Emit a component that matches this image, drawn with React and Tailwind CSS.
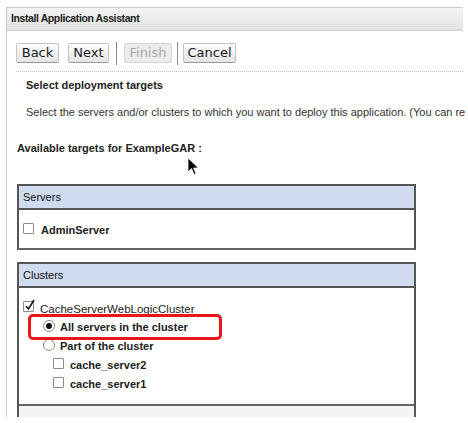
import React from "react";

const sans = { fontFamily: '"Liberation Sans", Arial, sans-serif' };

function Btn({ children, disabled, w }) {
  return (
    <div
      className={`h-[20px] ${w} flex items-center justify-center border rounded-[2px] text-[13px] ${
        disabled
          ? "border-[#d4d4d4] bg-[#ececec] text-[#a8a8a8]"
          : "border-[#c4c4c4] border-b-[#9a9a9a] bg-gradient-to-b from-[#fdfdfd] to-[#e4e4e4] text-[#1a1a1a]"
      }`}
      style={{ fontFamily: '"DejaVu Sans", sans-serif' }}
    >
      {children}
    </div>
  );
}

function Box({ checked }) {
  return (
    <div className="w-[11px] h-[11px] border border-[#8a8a8a] bg-white rounded-[1px] relative shrink-0">
      {checked && (
        <svg className="absolute left-[0px] top-[-3px]" width="12" height="13" viewBox="0 0 12 13">
          <path d="M2 7 L4.5 10 L10 1" fill="none" stroke="#111" strokeWidth="1.6" />
        </svg>
      )}
    </div>
  );
}

function Radio({ checked }) {
  return (
    <div className="w-[12px] h-[12px] rounded-full border border-[#8a8a8a] bg-white flex items-center justify-center shrink-0">
      {checked && <div className="w-[6px] h-[6px] rounded-full bg-[#111]" />}
    </div>
  );
}

export default function App() {
  return (
    <div className="w-[468px] h-[423px] bg-white relative overflow-hidden pt-[7px] pl-[6px]" style={sans}>
      <div className="w-[457px] h-[410px] border-l border-t border-[#c9c9c9] flex flex-col">
        <div className="h-[23px] shrink-0 bg-gradient-to-b from-[#f4f4f4] to-[#e3e3e3] border-b border-[#d0d0d0] flex items-center pl-[4px] text-[10.5px] tracking-[-0.4px] font-bold text-[#222]">
          Install Application Assistant
        </div>
        <div className="flex items-center pl-[9px] mt-[12px] h-[20px] shrink-0">
          <Btn w="w-[43px]">Back</Btn>
          <div className="w-[9px]" />
          <Btn w="w-[41px]">Next</Btn>
          <div className="w-[1px] h-[23px] bg-[#8c8c8c] mx-[7px]" />
          <Btn w="w-[48px]" disabled>Finish</Btn>
          <div className="w-[1px] h-[23px] bg-[#8c8c8c] mx-[5px]" />
          <Btn w="w-[53px]">Cancel</Btn>
        </div>
        <div className="ml-[9px] mt-[8px] border-t border-dotted border-[#bdbdbd] shrink-0" />
        <div className="pl-[19px] mt-[6px] h-[14px] leading-[14px] text-[11px] font-bold text-[#222] shrink-0">Select deployment targets</div>
        <div className="pl-[19px] mt-[13px] h-[14px] leading-[14px] text-[11px] text-[#333] whitespace-nowrap shrink-0">
          Select the servers and/or clusters to which you want to deploy this application. (You can re
        </div>
        <div className="pl-[10px] mt-[22px] h-[14px] leading-[14px] text-[11px] font-bold text-[#222] whitespace-nowrap shrink-0">Available targets for ExampleGAR :</div>

        <div className="ml-[10px] mt-[29px] w-[399px] h-[66px] border-2 border-[#555] border-b-[#666] shrink-0 flex flex-col">
          <div className="h-[24px] bg-[#cfdbee] border-b-2 border-[#555] flex items-center pl-[4px] text-[11px] text-[#111] shrink-0">Servers</div>
          <div className="flex-1 flex items-center pl-[4px] gap-[7px] pb-[2px]">
            <Box />
            <span className="text-[11px] font-bold text-[#222] relative top-[2px]">AdminServer</span>
          </div>
        </div>

        <div className="ml-[10px] mt-[12px] w-[399px] border-2 border-b-0 border-[#555] flex-1 flex flex-col">
          <div className="h-[24px] bg-[#cfdbee] border-b-2 border-[#555] flex items-center pl-[4px] text-[11px] text-[#111] shrink-0">Clusters</div>
          <div className="h-[118px] shrink-0 border-b-2 border-[#666] relative pt-[9px]">
            <div className="flex items-center pl-[4px] gap-[6px] h-[19px]">
              <Box checked />
              <span className="text-[11.5px] text-[#222] relative top-[3px]">CacheServerWebLogicCluster</span>
            </div>
            <div className="flex items-center pl-[24px] gap-[5px] h-[19px]">
              <Radio checked />
              <span className="text-[11px] font-bold text-[#222] relative top-[2px]">All servers in the cluster</span>
            </div>
            <div className="flex items-center pl-[24px] gap-[5px] h-[19px]">
              <Radio />
              <span className="text-[11px] font-bold text-[#222] relative top-[2px]">Part of the cluster</span>
            </div>
            <div className="flex items-center pl-[34px] gap-[6px] h-[19px]">
              <Box />
              <span className="text-[11px] font-bold text-[#222] relative top-[2px]">cache_server2</span>
            </div>
            <div className="flex items-center pl-[34px] gap-[6px] h-[19px]">
              <Box />
              <span className="text-[11px] font-bold text-[#222] relative top-[2px]">cache_server1</span>
            </div>
            <div className="absolute left-[9px] top-[26px] w-[194px] h-[26px] border-[3px] border-[#e8151b] rounded-[5px]" />
          </div>
          <div className="flex-1 bg-[#f4f4f4]" />
        </div>
      </div>
      <svg className="absolute left-[187px] top-[157px]" width="13" height="19" viewBox="0 0 13 19">
        <path d="M1 1 L1 15 L4.5 11.5 L7 17.5 L9 16.6 L6.6 11 L11.5 11 Z" fill="#000" stroke="#fff" strokeWidth="0.8" />
      </svg>
    </div>
  );
}
